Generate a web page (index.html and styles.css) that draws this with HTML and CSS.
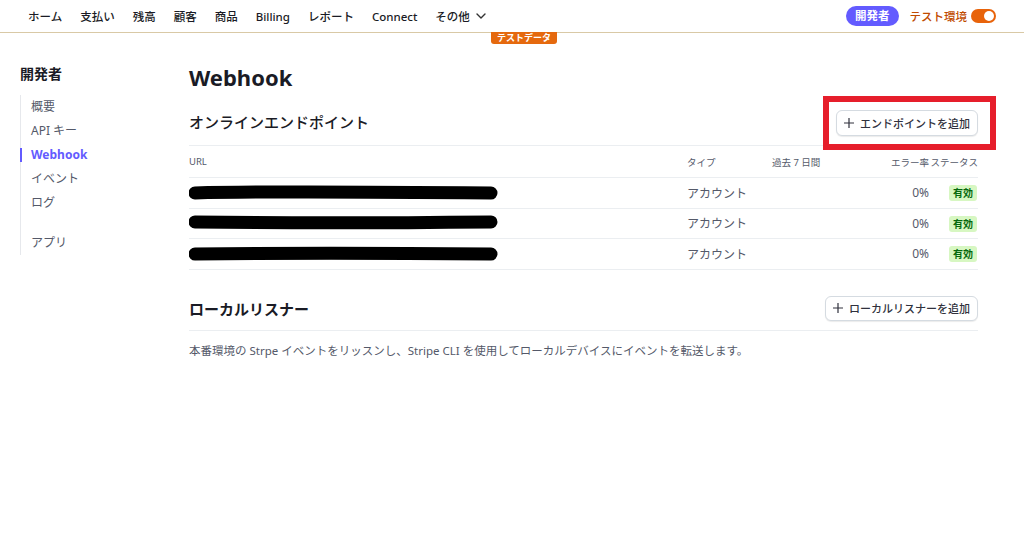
FILE: index.html
```html
<!DOCTYPE html>
<html lang="ja">
<head>
    <meta charset="UTF-8">
    <meta name="viewport" content="width=device-width, initial-scale=1.0">
    <title>Webhook</title>
    <link rel="stylesheet" href="styles.css">
</head>
<body>
    <!-- Top navigation -->
    <header class="topbar">
        <nav class="nav">
            <a>ホーム</a>
            <a>支払い</a>
            <a>残高</a>
            <a>顧客</a>
            <a>商品</a>
            <a>Billing</a>
            <a>レポート</a>
            <a>Connect</a>
            <a class="more">その他
                <svg width="10" height="6" viewBox="0 0 10 6"><path d="M1 1l4 4 4-4" fill="none" stroke="#333" stroke-width="1.4" stroke-linecap="round" stroke-linejoin="round"/></svg>
            </a>
        </nav>
        <div class="top-right">
            <span class="dev-pill">開発者</span>
            <span class="test-label">テスト環境</span>
            <span class="toggle"><span class="knob"></span></span>
        </div>
        <span class="test-badge">テストデータ</span>
    </header>

    <div class="layout">
        <!-- Sidebar -->
        <aside class="sidebar">
            <h3>開発者</h3>
            <ul class="side-list">
                <li>概要</li>
                <li>API キー</li>
                <li class="active">Webhook</li>
                <li>イベント</li>
                <li>ログ</li>
                <li class="gap">アプリ</li>
            </ul>
        </aside>

        <!-- Main content -->
        <main class="main">
            <h1>Webhook</h1>

            <div class="section-head">
                <h2>オンラインエンドポイント</h2>
                <button class="btn"><svg width="10" height="10" viewBox="0 0 10 10"><path d="M5 0v10M0 5h10" stroke="#30313d" stroke-width="1.2"/></svg><span>エンドポイントを追加</span></button>
                <span class="highlight"></span>
            </div>

            <table class="endpoints">
                <thead>
                    <tr>
                        <th class="c-url">URL</th>
                        <th class="c-type">タイプ</th>
                        <th class="c-week">過去 7 日間</th>
                        <th class="c-err">エラー率</th>
                        <th class="c-status">ステータス</th>
                    </tr>
                </thead>
                <tbody>
                    <tr>
                        <td class="c-url"><svg class="scribble" width="312" height="16" viewBox="0 0 312 16"><path d="M6 8 C80 6 200 7 302 8" stroke="#000" stroke-width="13" stroke-linecap="round" fill="none"/></svg></td>
                        <td>アカウント</td>
                        <td></td>
                        <td class="c-err">0%</td>
                        <td class="c-status"><span class="ok">有効</span></td>
                    </tr>
                    <tr>
                        <td class="c-url"><svg class="scribble" width="312" height="16" viewBox="0 0 312 16"><path d="M6 7 C80 8 200 8 302 7" stroke="#000" stroke-width="13" stroke-linecap="round" fill="none"/></svg></td>
                        <td>アカウント</td>
                        <td></td>
                        <td class="c-err">0%</td>
                        <td class="c-status"><span class="ok">有効</span></td>
                    </tr>
                    <tr>
                        <td class="c-url"><svg class="scribble" width="312" height="16" viewBox="0 0 312 16"><path d="M6 8 C80 7 200 7 302 8" stroke="#000" stroke-width="13" stroke-linecap="round" fill="none"/></svg></td>
                        <td>アカウント</td>
                        <td></td>
                        <td class="c-err">0%</td>
                        <td class="c-status"><span class="ok">有効</span></td>
                    </tr>
                </tbody>
            </table>

            <div class="section-head local">
                <h2>ローカルリスナー</h2>
                <button class="btn"><svg width="10" height="10" viewBox="0 0 10 10"><path d="M5 0v10M0 5h10" stroke="#30313d" stroke-width="1.2"/></svg><span>ローカルリスナーを追加</span></button>
            </div>
            <p class="desc">本番環境の Strpe イベントをリッスンし、Stripe CLI を使用してローカルデバイスにイベントを転送します。</p>
        </main>
    </div>
</body>
</html>
```

FILE: styles.css
```css
body {
    margin: 0;
    font-family: "Noto Sans", "Noto Sans CJK JP", sans-serif;
    color: #1a1b25;
    background-color: #ffffff;
}

/* Top bar */
.topbar {
    position: relative;
    display: flex;
    align-items: center;
    justify-content: space-between;
    height: 32px;
    padding: 0 28px;
    border-bottom: 1px solid #d9c9a6;
}

.nav {
    display: flex;
    align-items: center;
    gap: 18px;
}

.nav a {
    font-size: 11.5px;
    font-weight: 500;
    color: #1a1b25;
    display: flex;
    align-items: center;
    gap: 6px;
}

.top-right {
    display: flex;
    align-items: center;
}

.dev-pill {
    background-color: #635bff;
    color: #fff;
    font-size: 11.5px;
    font-weight: 700;
    border-radius: 10px;
    padding: 2px 9px;
    line-height: 16px;
}

.test-label {
    color: #c04b00;
    font-size: 11.5px;
    font-weight: 500;
    margin-left: 11px;
}

.toggle {
    width: 25px;
    height: 14px;
    background-color: #e8630a;
    border-radius: 8px;
    margin-left: 4px;
    position: relative;
}

.knob {
    position: absolute;
    right: 2px;
    top: 2px;
    width: 10px;
    height: 10px;
    border-radius: 50%;
    background-color: #fff;
}

.test-badge {
    position: absolute;
    left: 491px;
    top: 32px;
    background-color: #e5690e;
    color: #fff;
    font-size: 9px;
    font-weight: 700;
    line-height: 12px;
    padding: 0 6px;
    border-radius: 0 0 3px 3px;
}

/* Layout */
.layout {
    display: grid;
    grid-template-columns: 169px 789px;
    padding-left: 20px;
}

.sidebar h3 {
    margin: 30px 0 12px;
    font-size: 14px;
    font-weight: 700;
}

.side-list {
    list-style: none;
    margin: 0;
    padding: 0;
    border-left: 1px solid #e6e8ec;
}

.side-list li {
    font-size: 12px;
    color: #545969;
    padding-left: 10px;
    line-height: 24px;
    position: relative;
}

.side-list li.active {
    color: #635bff;
    font-weight: 700;
}

.side-list li.active::before {
    content: "";
    position: absolute;
    left: -1px;
    top: 5px;
    bottom: 5px;
    width: 2px;
    background-color: #635bff;
}

.side-list li.gap {
    margin-top: 16px;
}

/* Main */
.main h1 {
    margin: 29px 0 0;
    font-size: 22px;
    font-weight: 700;
    line-height: 30px;
}

.section-head {
    position: relative;
    display: flex;
    justify-content: space-between;
    align-items: center;
    padding: 18px 0 9px;
    border-bottom: 1px solid #ebeef1;
}

.section-head h2 {
    margin: 0 0 4px;
    font-size: 15px;
    font-weight: 500;
}

.section-head.local {
    margin-top: 26px;
    padding: 0 0 9px;
}

.section-head.local h2 {
    font-weight: 700;
    font-size: 15px;
    margin: 0;
}

.btn {
    font-family: inherit;
    color: #30313d;
    background-color: #fff;
    border: 1px solid #d5dbe1;
    border-radius: 6px;
    padding: 0 7px;
    height: 26px;
    box-shadow: 0 1px 1px rgba(0, 0, 0, 0.08);
    display: flex;
    align-items: center;
    gap: 6px;
}

.btn span {
    font-size: 11px;
    font-weight: 500;
}

.section-head.local .btn {
    height: 25px;
}

.highlight {
    position: absolute;
    left: 634px;
    top: 4px;
    width: 161px;
    height: 42px;
    border: 6px solid #e61e2b;
}

/* Endpoints table */
.endpoints {
    width: 100%;
    border-collapse: collapse;
    font-size: 12px;
    color: #545969;
}

.endpoints th {
    font-size: 9.5px;
    font-weight: 400;
    text-align: left;
    height: 31px;
    padding: 0;
    border-bottom: 1px solid #ebeef1;
}

.endpoints td {
    height: 29.5px;
    padding: 0;
    border-bottom: 1px solid #ebeef1;
}

.c-url { width: 498px; }
.c-type { width: 85px; }
.endpoints .c-err { text-align: right; width: 62px; }
.endpoints .c-status { text-align: right; width: 49px; }

.scribble {
    display: block;
}

.ok {
    background-color: #d7f7c2;
    color: #05690d;
    font-size: 10px;
    font-weight: 700;
    padding: 1px 4px;
    border-radius: 3px;
    margin-right: 1px;
}

.desc {
    font-size: 11.5px;
    color: #545969;
    margin: 11px 0 0;
}
```
